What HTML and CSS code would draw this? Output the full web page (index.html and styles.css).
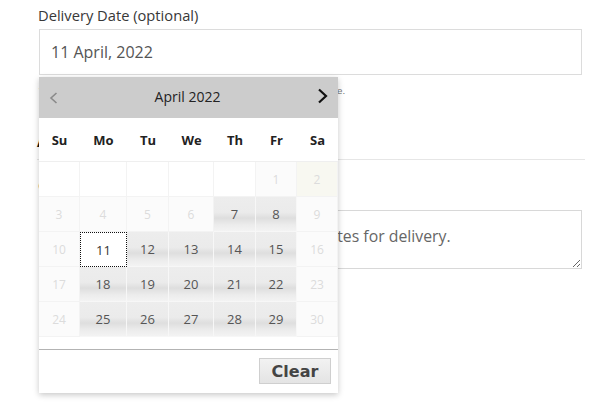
FILE: index.html
```html
<!DOCTYPE html>
<html>
<head>
<meta charset="utf-8">
<link rel="stylesheet" href="styles.css">
</head>
<body>
<div class="form">
  <label class="field-label">Delivery Date (optional)</label>
  <div class="date-input">11 April, 2022</div>
  <p class="desc">We will try our best to deliver your order on the specified delivery date.</p>
  <h3 class="section-title">Additional information</h3>
  <label class="field-label notes-label">Order notes (optional)</label>
  <textarea class="notes" placeholder="Notes about your order, e.g. special notes for delivery."></textarea>

  <div class="datepicker">
    <div class="dp-header">
      <span class="dp-prev"><svg width="9" height="12" viewBox="0 0 9 12"><polyline points="7.5,1 2,6 7.5,11" fill="none" stroke="#8a8a8a" stroke-width="1.6"/></svg></span>
      <span class="dp-title">April 2022</span>
      <span class="dp-next"><svg width="11" height="16" viewBox="0 0 11 16"><polyline points="2,1.5 9,8 2,14.5" fill="none" stroke="#111" stroke-width="2.2"/></svg></span>
    </div>
    <div class="dp-grid">
      <div class="dn">Su</div><div class="dn">Mo</div><div class="dn">Tu</div><div class="dn">We</div><div class="dn">Th</div><div class="dn">Fr</div><div class="dn">Sa</div>

      <div class="c empty"></div><div class="c empty"></div><div class="c empty"></div><div class="c empty"></div><div class="c empty"></div><div class="c off">1</div><div class="c off wk">2</div>

      <div class="c off">3</div><div class="c off">4</div><div class="c off">5</div><div class="c off">6</div><div class="c on">7</div><div class="c on">8</div><div class="c off">9</div>

      <div class="c off">10</div><div class="c focus">11</div><div class="c on">12</div><div class="c on">13</div><div class="c on">14</div><div class="c on">15</div><div class="c off">16</div>

      <div class="c off">17</div><div class="c on">18</div><div class="c on">19</div><div class="c on">20</div><div class="c on">21</div><div class="c on">22</div><div class="c off">23</div>

      <div class="c off">24</div><div class="c on">25</div><div class="c on">26</div><div class="c on">27</div><div class="c on">28</div><div class="c on">29</div><div class="c off">30</div>
    </div>
    <div class="dp-spacer"></div>
    <div class="dp-footer">
      <button class="dp-clear">Clear</button>
    </div>
  </div>
</div>
</body>
</html>
```
FILE: styles.css
```css
html, body {
  margin: 0;
  padding: 0;
  background: #fff;
}

.form {
  position: relative;
  box-sizing: border-box;
  min-height: 410px;
  padding: 5px 14px 0 39px;
  font-family: "Open Sans", "DejaVu Sans", sans-serif;
}

.field-label {
  display: block;
  font-size: 14.7px;
  font-weight: 500;
  line-height: 20px;
  color: #383838;
  margin: 0 0 4px -1px;
}

.date-input {
  box-sizing: border-box;
  height: 46px;
  border: 1px solid #dcdcdc;
  padding: 0 11px;
  font-size: 16px;
  line-height: 44px;
  color: #555;
}

.desc {
  margin: 10px 0 0;
  font-family: "Liberation Sans", Arial, sans-serif;
  font-size: 9.85px;
  line-height: 12px;
  color: #777;
  white-space: nowrap;
}

.section-title {
  margin: 31px -3px 0 -2px;
  padding-bottom: 7px;
  font-size: 18px;
  line-height: 24px;
  font-weight: 700;
  color: #111;
  border-bottom: 1px solid #e6e6e6;
}

.notes-label {
  margin-top: 15px;
  margin-bottom: 15px;
}

.notes {
  display: block;
  box-sizing: border-box;
  width: 100%;
  height: 59px;
  margin: 0;
  border: 1px solid #d8d8d8;
  padding: 14px 12px;
  font-family: "Open Sans", sans-serif;
  font-size: 15.8px;
  color: #555;
  resize: vertical;
}
.notes::placeholder {
  color: #666;
}

/* datepicker popup */
.datepicker {
  position: absolute;
  left: 39px;
  top: 77px;
  width: 299px;
  background: #fff;
  box-shadow: 0 2px 6px rgba(0, 0, 0, 0.22);
  font-family: "Open Sans", sans-serif;
}

.dp-header {
  height: 41px;
  background: #cccccc;
  display: flex;
  align-items: center;
  justify-content: space-between;
  padding: 0 9px 0 7px;
}
.dp-prev, .dp-next {
  display: flex;
  width: 14px;
  justify-content: center;
}
.dp-next { margin-top: -3px; }
.dp-title {
  font-size: 14px;
  color: #222;
  margin-top: -2px;
}

.dp-grid {
  display: grid;
  grid-template-columns: 41px 47px 42px 45px 42px 41px 41px;
  grid-template-rows: 44px repeat(5, 35px);
}
.dn {
  display: flex;
  align-items: center;
  justify-content: center;
  font-weight: 700;
  font-size: 13px;
  color: #222;
  border-bottom: 1px solid #efefef;
}
.c {
  box-sizing: border-box;
  display: flex;
  align-items: center;
  justify-content: center;
  font-size: 13px;
  border-right: 1px solid #f3f3f3;
  border-bottom: 1px solid #f3f3f3;
}
.c.empty { background: #fff; }
.c.off {
  background: #fbfbfb;
  color: #dcdcdc;
  font-size: 12px;
}
.c.off.wk { background: #f8f8f1; }
.c.on {
  color: #555;
  background: linear-gradient(#ededed 0%, #ebebeb 45%, #dedede 62%, #ececec 82%, #f3f3f3 100%);
  border-color: #f7f7f7;
}
.c.focus {
  background: #fff;
  color: #333;
  border: 1px dotted #111;
}

.dp-spacer {
  height: 12px;
  border-bottom: 1px solid #b3b3b3;
}
.dp-footer {
  height: 43px;
  display: flex;
  justify-content: flex-end;
  align-items: flex-start;
  padding: 8px 7px 0 0;
  box-sizing: border-box;
}
.dp-clear {
  height: 26px;
  width: 72px;
  padding: 0;
  border: 1px solid #cfcfcf;
  background: linear-gradient(#f2f2f2, #e4e4e4);
  font-family: "DejaVu Sans", Verdana, sans-serif;
  font-weight: 700;
  font-size: 16px;
  color: #444;
}
```
